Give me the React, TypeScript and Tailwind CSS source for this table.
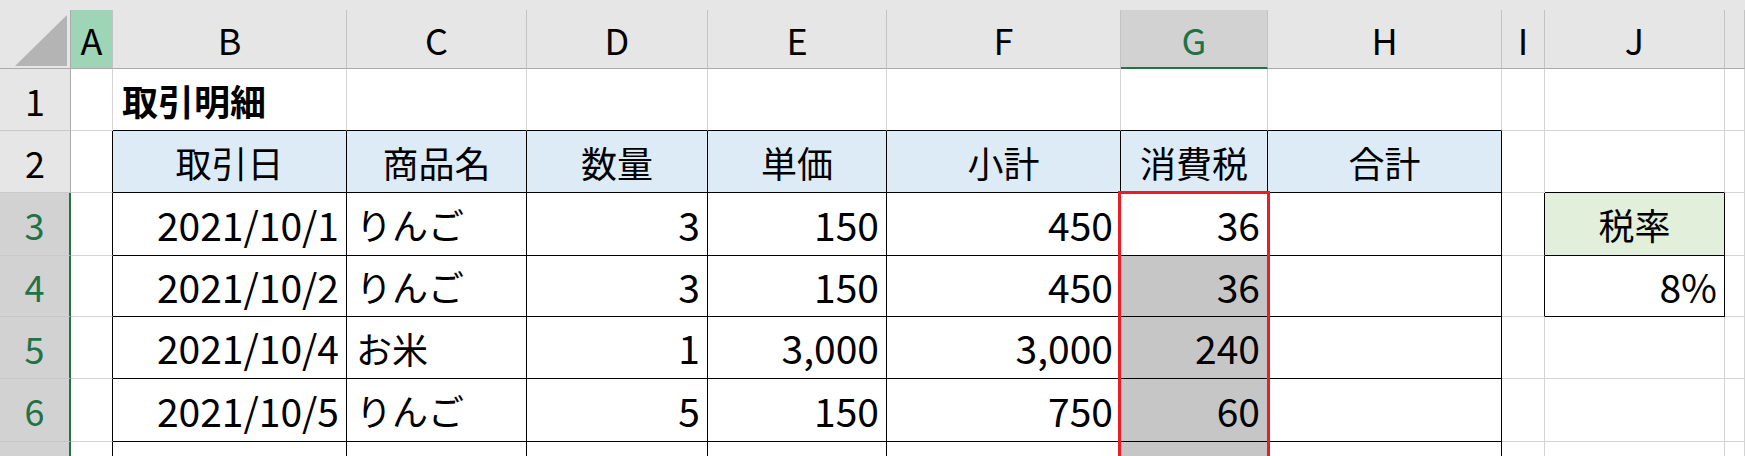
import type { JSX } from "react";

/** Column letters shown in the sheet header, with the corner first. */
const COLUMNS = ["A", "B", "C", "D", "E", "F", "G", "H", "I", "J", ""];

type Align = "left" | "right" | "center";

interface CellDef {
  readonly text?: string;
  readonly align?: Align;
  readonly bold?: boolean;
  readonly bg?: string;
  readonly borderR?: boolean;
  readonly borderB?: boolean;
}

/** Body rows 1..7, columns A..K. */
const ROWS: CellDef[][] = [
  // row 1
  [
    {},
    { text: "取引明細", align: "left", bold: true, borderB: true },
    { borderB: true },
    { borderB: true },
    { borderB: true },
    { borderB: true },
    { borderB: true },
    { borderB: true },
    {},
    {},
    {},
  ],
  // row 2 (table header)
  [
    { borderR: true },
    ...["取引日", "商品名", "数量", "単価", "小計", "消費税", "合計"].map(
      (t): CellDef => ({ text: t, align: "center", bg: "bg-[#ddebf7]", borderR: true, borderB: true }),
    ),
    {},
    { borderB: true },
    {},
  ],
  // rows 3..7
  ...[
    ["2021/10/1", "りんご", "3", "150", "450", "36", "税率"],
    ["2021/10/2", "りんご", "3", "150", "450", "36", "8%"],
    ["2021/10/4", "お米", "1", "3,000", "3,000", "240", ""],
    ["2021/10/5", "りんご", "5", "150", "750", "60", ""],
    ["", "", "", "", "", "", ""],
  ].map((r, i): CellDef[] => [
    { borderR: true },
    { text: r[0], align: "right", borderR: true, borderB: true },
    { text: r[1], align: "left", borderR: true, borderB: true },
    { text: r[2], align: "right", borderR: true, borderB: true },
    { text: r[3], align: "right", borderR: true, borderB: true },
    { text: r[4], align: "right", borderR: true, borderB: true },
    {
      text: r[5],
      align: "right",
      bg: i === 0 ? "bg-white" : "bg-[#c6c6c6]",
      borderR: true,
      borderB: true,
    },
    { borderR: true, borderB: true },
    { borderR: i < 2 },
    i === 0
      ? { text: r[6], align: "center", bg: "bg-[#e2efda]", borderR: true, borderB: true }
      : i === 1
        ? { text: r[6], align: "right", borderR: true, borderB: true }
        : {},
    {},
  ]),
];

const ALIGN: Record<Align, string> = {
  left: "justify-start pl-[9px]",
  right: "justify-end pr-[7px]",
  center: "justify-center",
};

function ColumnHeader(props: { readonly label: string }): JSX.Element {
  const selected = props.label === "G";
  const active = props.label === "A";
  return (
    <div className="flex flex-col bg-[#e6e6e6]">
      <div className="h-[10px]" />
      <div
        className={
          "flex flex-1 items-center justify-center border-r border-[#c3c3c3] text-[36px] leading-none " +
          (selected
            ? "border-b-2 border-b-[#217346] bg-[#d2d2d2] text-[#217346]"
            : active
              ? "border-b border-b-[#ababab] bg-[#9fd5b7] text-black"
              : "border-b border-b-[#ababab] text-black")
        }
      >
        {props.label}
      </div>
    </div>
  );
}

function RowHeader(props: { readonly n: number }): JSX.Element {
  const selected = props.n >= 3;
  return (
    <div
      className={
        "flex items-center justify-center border-b border-[#c8c8c8] text-[36px] leading-none " +
        (selected
          ? "border-r-2 border-r-[#217346] bg-[#d2d2d2] text-[#217346]"
          : "border-r border-r-[#ababab] bg-[#e6e6e6] text-black")
      }
    >
      {props.n < 7 ? props.n : ""}
    </div>
  );
}

function Cell(props: { readonly cell: CellDef }): JSX.Element {
  const c = props.cell;
  const numeric = c.align === "right";
  return (
    <div
      className={
        "flex items-center overflow-visible whitespace-nowrap border-r border-b leading-none " +
        (numeric ? "text-[39px] " : "text-[36px] ") +
        (c.borderR ? "border-r-black " : "border-r-[#d4d4d4] ") +
        (c.borderB ? "border-b-black " : "border-b-[#d4d4d4] ") +
        (c.bg ?? "bg-white") +
        " " +
        ALIGN[c.align ?? "left"] +
        (c.bold ? " font-bold" : "")
      }
    >
      {c.text}
    </div>
  );
}

export default function App(): JSX.Element {
  return (
    <div className="relative h-[456px] w-[1745px] overflow-hidden bg-white font-['Noto_Sans_CJK_JP',sans-serif] text-black">
      <div className="grid grid-cols-[71px_42px_234px_180px_181px_179px_234px_147px_234px_43px_180px_20px] grid-rows-[69px_62px_62px_63px_61px_62px_63px_62px]">
        <div className="flex flex-col bg-[#e6e6e6]">
          <div className="h-[10px]" />
          <div className="flex-1 border-r border-b border-[#ababab]">
            <svg width="70" height="58" viewBox="0 0 70 58">
              <polygon points="15,56 67,5 67,56" fill="#b4b4b4" />
            </svg>
          </div>
        </div>
        {COLUMNS.map((c, i) => (
          <ColumnHeader key={i} label={c} />
        ))}
        {ROWS.map((row, r) => [
          <RowHeader key={`h${r}`} n={r + 1} />,
          ...row.map((cell, c) => <Cell key={`${r}-${c}`} cell={cell} />),
        ])}
      </div>
      {/* red highlight around the 消費税 values */}
      <div className="absolute left-[1118px] top-[191px] h-[300px] w-[152px] border-[3px] border-[#ed1c24]" />
    </div>
  );
}
